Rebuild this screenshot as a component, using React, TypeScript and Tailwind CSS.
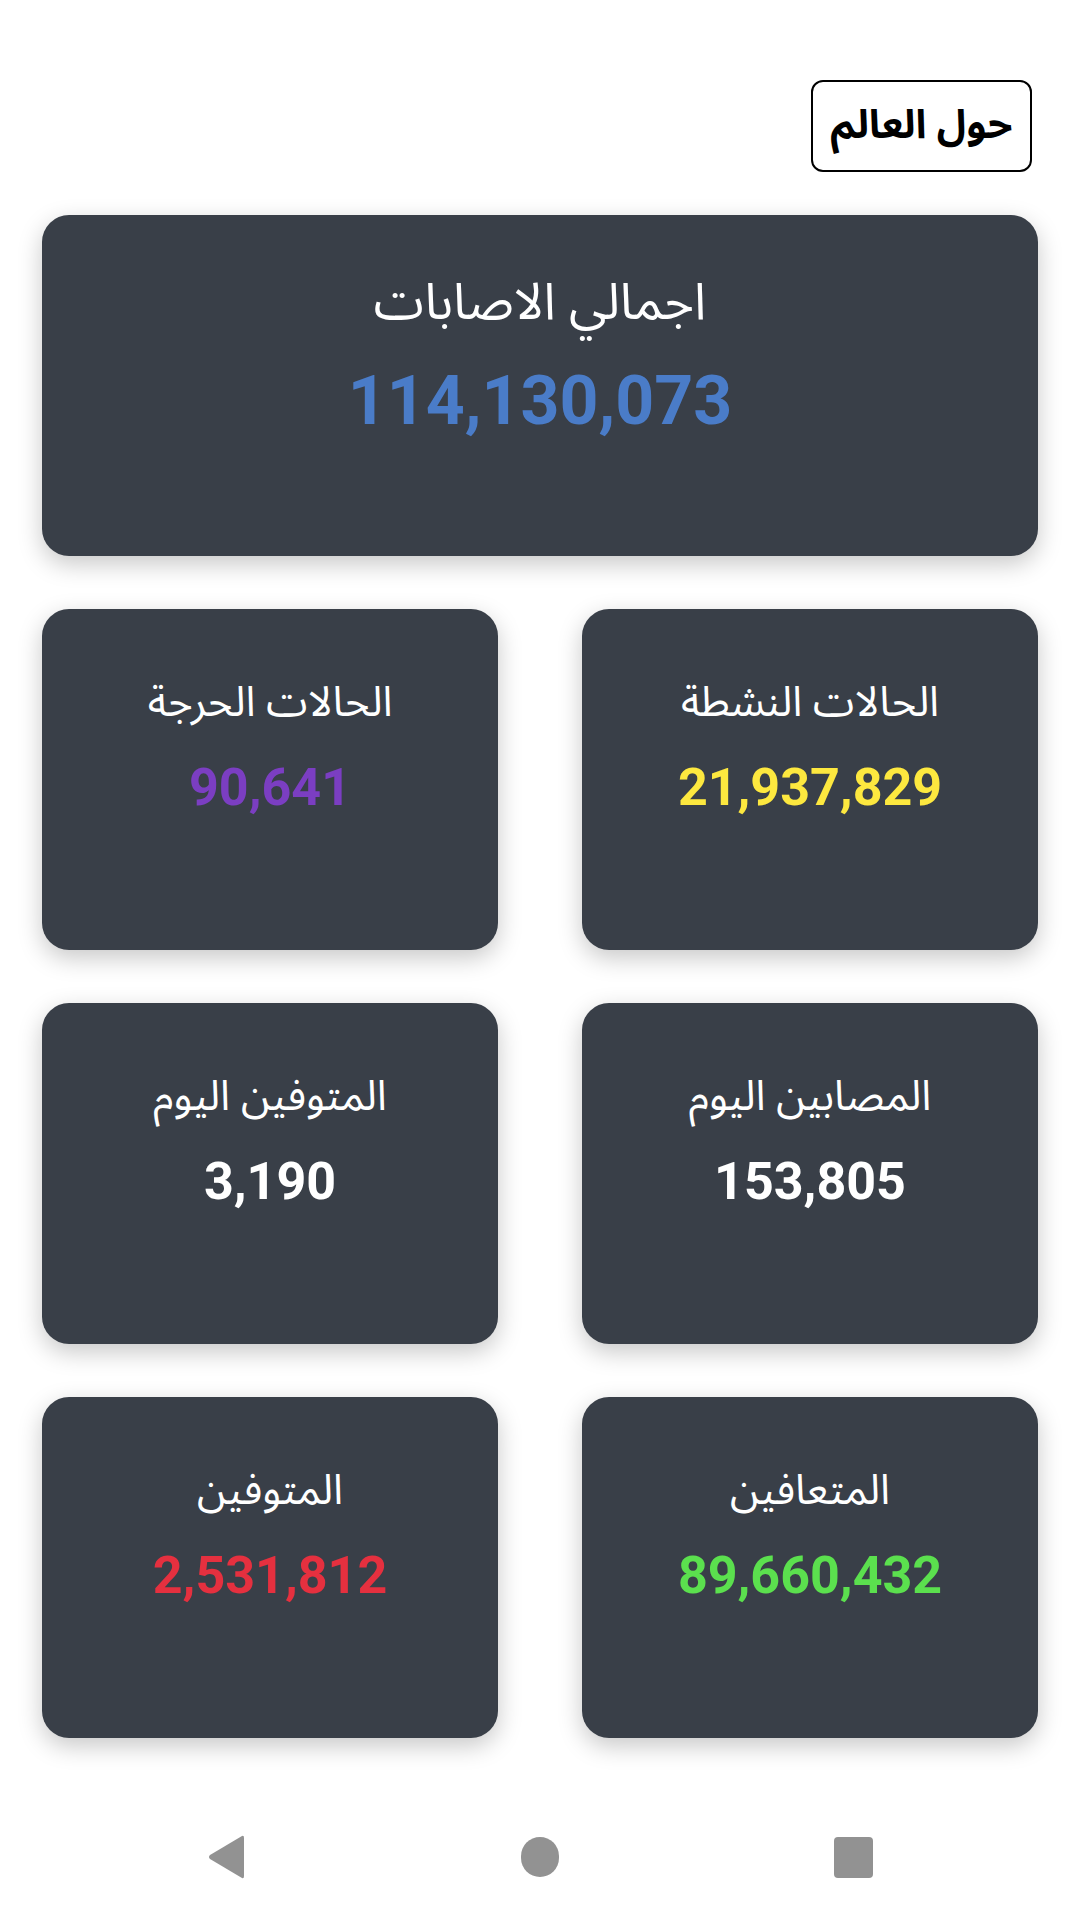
import React from 'react';

type Stat = {
  title: string;
  value: string;
  color: string;
};

const stats: Stat[] = [
  { title: 'الحالات النشطة', value: '21,937,829', color: 'text-[#fde83f]' },
  { title: 'الحالات الحرجة', value: '90,641', color: 'text-[#7b3ec2]' },
  { title: 'المصابين اليوم', value: '153,805', color: 'text-white' },
  { title: 'المتوفين اليوم', value: '3,190', color: 'text-white' },
  { title: 'المتعافين', value: '89,660,432', color: 'text-[#5be04e]' },
  { title: 'المتوفين', value: '2,531,812', color: 'text-[#e5303f]' },
];

const arabicFont = "font-['Noto_Sans_Arabic','DejaVu_Sans',sans-serif]";

const StatCard = ({ title, value, color }: Stat) => (
  <div className="h-[341px] rounded-[27px] bg-[#393f48] shadow-[0_8px_24px_rgba(0,0,0,0.22)] flex flex-col items-center pt-[64px]">
    <div className={`${arabicFont} text-[42px] leading-[60px] text-white`}>{title}</div>
    <div
      dir="ltr"
      className={`font-['Roboto',sans-serif] font-bold text-[52px] leading-[64px] mt-[23px] ${color}`}
    >
      {value}
    </div>
  </div>
);

const NavBar = () => (
  <div className="h-[144px] bg-white flex items-center justify-between px-[207px] pt-[18px]" dir="ltr">
    <svg width="38" height="46" viewBox="0 0 38 46">
      <path
        d="M35 2 Q37 1 37 4 L37 42 Q37 45 35 44 L3 25 Q1 23 3 21 Z"
        fill="#929292"
      />
    </svg>
    <div className="w-[38px] h-[40px] rounded-full bg-[#929292]" />
    <div className="w-[39px] h-[41px] rounded-[4px] bg-[#929292]" />
  </div>
);

export default function App() {
  return (
    <div dir="rtl" className="w-[1080px] min-h-[1920px] bg-white flex flex-col">
      <div className="flex-1 px-[42px] pt-[80px]">
        <div className="flex justify-start pr-[6px]">
          <button
            className={`${arabicFont} h-[92px] w-[221px] rounded-[12px] border-[2px] border-black bg-white text-black font-bold text-[40px]`}
          >
            حول العالم
          </button>
        </div>

        <div className="mt-[43px] h-[341px] rounded-[27px] bg-[#393f48] shadow-[0_8px_24px_rgba(0,0,0,0.22)] flex flex-col items-center pt-[53px]">
          <div className={`${arabicFont} text-[51px] leading-[70px] text-white`}>اجمالي الاصابات</div>
          <div dir="ltr" className="font-['Roboto',sans-serif] font-bold text-[68px] leading-[80px] mt-[23px] text-[#4a7cc8]">
            114,130,073
          </div>
        </div>

        <div className="mt-[53px] grid grid-cols-2 gap-x-[84px] gap-y-[53px]">
          {stats.map((s) => (
            <StatCard key={s.title} {...s} />
          ))}
        </div>
      </div>

      <NavBar />
    </div>
  );
}
